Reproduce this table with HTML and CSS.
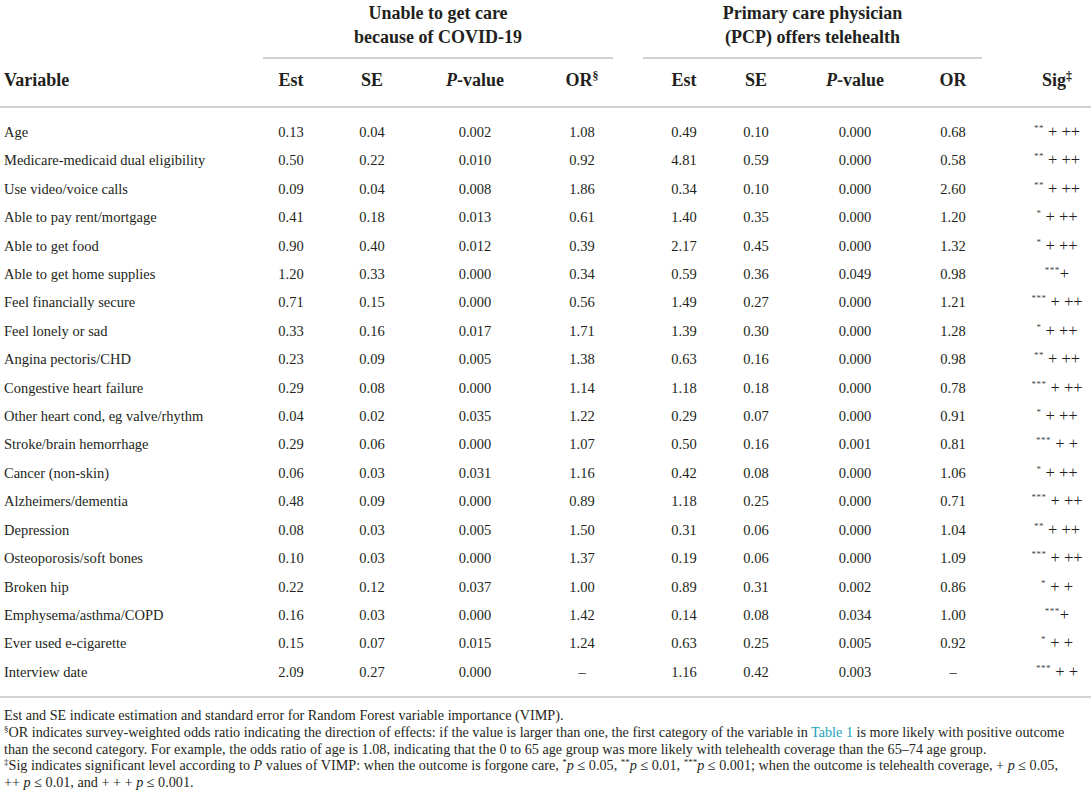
FILE: index.html
```html
<!DOCTYPE html>
<html lang="en">
<head>
<meta charset="utf-8">
<title>Table</title>
<link rel="stylesheet" href="styles.css">
</head>
<body>
<div class="page">
<table class="tbl">
  <colgroup>
    <col class="c-var"><col class="c-est1"><col class="c-se1"><col class="c-p1"><col class="c-or1">
    <col class="c-est2"><col class="c-se2"><col class="c-p2"><col class="c-or2"><col class="c-sig">
  </colgroup>
  <thead>
    <tr class="grp-row">
      <th></th>
      <th colspan="4"><div class="grp grp1">Unable to get care<br>because of COVID-19</div></th>
      <th colspan="4"><div class="grp grp2">Primary care physician<br>(PCP) offers telehealth</div></th>
      <th></th>
    </tr>
    <tr class="col-row">
      <th class="var">Variable</th>
      <th>Est</th><th>SE</th><th><i>P</i>-value</th><th>OR<sup class="fn">§</sup></th>
      <th>Est</th><th>SE</th><th><i>P</i>-value</th><th>OR</th><th class="sig">Sig<sup class="fn">‡</sup></th>
    </tr>
  </thead>
  <tbody>
    <tr><td class="var">Age</td><td>0.13</td><td>0.04</td><td>0.002</td><td>1.08</td><td>0.49</td><td>0.10</td><td>0.000</td><td>0.68</td><td class="sig"><sup class="ast">**</sup> + ++</td></tr>
    <tr><td class="var">Medicare-medicaid dual eligibility</td><td>0.50</td><td>0.22</td><td>0.010</td><td>0.92</td><td>4.81</td><td>0.59</td><td>0.000</td><td>0.58</td><td class="sig"><sup class="ast">**</sup> + ++</td></tr>
    <tr><td class="var">Use video/voice calls</td><td>0.09</td><td>0.04</td><td>0.008</td><td>1.86</td><td>0.34</td><td>0.10</td><td>0.000</td><td>2.60</td><td class="sig"><sup class="ast">**</sup> + ++</td></tr>
    <tr><td class="var">Able to pay rent/mortgage</td><td>0.41</td><td>0.18</td><td>0.013</td><td>0.61</td><td>1.40</td><td>0.35</td><td>0.000</td><td>1.20</td><td class="sig"><sup class="ast">*</sup> + ++</td></tr>
    <tr><td class="var">Able to get food</td><td>0.90</td><td>0.40</td><td>0.012</td><td>0.39</td><td>2.17</td><td>0.45</td><td>0.000</td><td>1.32</td><td class="sig"><sup class="ast">*</sup> + ++</td></tr>
    <tr><td class="var">Able to get home supplies</td><td>1.20</td><td>0.33</td><td>0.000</td><td>0.34</td><td>0.59</td><td>0.36</td><td>0.049</td><td>0.98</td><td class="sig"><sup class="ast">***</sup>+</td></tr>
    <tr><td class="var">Feel financially secure</td><td>0.71</td><td>0.15</td><td>0.000</td><td>0.56</td><td>1.49</td><td>0.27</td><td>0.000</td><td>1.21</td><td class="sig"><sup class="ast">***</sup> + ++</td></tr>
    <tr><td class="var">Feel lonely or sad</td><td>0.33</td><td>0.16</td><td>0.017</td><td>1.71</td><td>1.39</td><td>0.30</td><td>0.000</td><td>1.28</td><td class="sig"><sup class="ast">*</sup> + ++</td></tr>
    <tr><td class="var">Angina pectoris/CHD</td><td>0.23</td><td>0.09</td><td>0.005</td><td>1.38</td><td>0.63</td><td>0.16</td><td>0.000</td><td>0.98</td><td class="sig"><sup class="ast">**</sup> + ++</td></tr>
    <tr><td class="var">Congestive heart failure</td><td>0.29</td><td>0.08</td><td>0.000</td><td>1.14</td><td>1.18</td><td>0.18</td><td>0.000</td><td>0.78</td><td class="sig"><sup class="ast">***</sup> + ++</td></tr>
    <tr><td class="var">Other heart cond, eg valve/rhythm</td><td>0.04</td><td>0.02</td><td>0.035</td><td>1.22</td><td>0.29</td><td>0.07</td><td>0.000</td><td>0.91</td><td class="sig"><sup class="ast">*</sup> + ++</td></tr>
    <tr><td class="var">Stroke/brain hemorrhage</td><td>0.29</td><td>0.06</td><td>0.000</td><td>1.07</td><td>0.50</td><td>0.16</td><td>0.001</td><td>0.81</td><td class="sig"><sup class="ast">***</sup> + +</td></tr>
    <tr><td class="var">Cancer (non-skin)</td><td>0.06</td><td>0.03</td><td>0.031</td><td>1.16</td><td>0.42</td><td>0.08</td><td>0.000</td><td>1.06</td><td class="sig"><sup class="ast">*</sup> + ++</td></tr>
    <tr><td class="var">Alzheimers/dementia</td><td>0.48</td><td>0.09</td><td>0.000</td><td>0.89</td><td>1.18</td><td>0.25</td><td>0.000</td><td>0.71</td><td class="sig"><sup class="ast">***</sup> + ++</td></tr>
    <tr><td class="var">Depression</td><td>0.08</td><td>0.03</td><td>0.005</td><td>1.50</td><td>0.31</td><td>0.06</td><td>0.000</td><td>1.04</td><td class="sig"><sup class="ast">**</sup> + ++</td></tr>
    <tr><td class="var">Osteoporosis/soft bones</td><td>0.10</td><td>0.03</td><td>0.000</td><td>1.37</td><td>0.19</td><td>0.06</td><td>0.000</td><td>1.09</td><td class="sig"><sup class="ast">***</sup> + ++</td></tr>
    <tr><td class="var">Broken hip</td><td>0.22</td><td>0.12</td><td>0.037</td><td>1.00</td><td>0.89</td><td>0.31</td><td>0.002</td><td>0.86</td><td class="sig"><sup class="ast">*</sup> + +</td></tr>
    <tr><td class="var">Emphysema/asthma/COPD</td><td>0.16</td><td>0.03</td><td>0.000</td><td>1.42</td><td>0.14</td><td>0.08</td><td>0.034</td><td>1.00</td><td class="sig"><sup class="ast">***</sup>+</td></tr>
    <tr><td class="var">Ever used e-cigarette</td><td>0.15</td><td>0.07</td><td>0.015</td><td>1.24</td><td>0.63</td><td>0.25</td><td>0.005</td><td>0.92</td><td class="sig"><sup class="ast">*</sup> + +</td></tr>
    <tr><td class="var">Interview date</td><td>2.09</td><td>0.27</td><td>0.000</td><td>–</td><td>1.16</td><td>0.42</td><td>0.003</td><td>–</td><td class="sig"><sup class="ast">***</sup> + +</td></tr>
  </tbody>
</table>
<div class="notes">
  <p>Est and SE indicate estimation and standard error for Random Forest variable importance (VIMP).</p>
  <p><sup class="fn-s">§</sup>OR indicates survey-weighted odds ratio indicating the direction of effects: if the value is larger than one, the first category of the variable in <span class="link">Table 1</span> is more likely with positive outcome<br>than the second category. For example, the odds ratio of age is 1.08, indicating that the 0 to 65 age group was more likely with telehealth coverage than the 65–74 age group.</p>
  <p><sup class="fn-s">‡</sup>Sig indicates significant level according to <i>P</i> values of VIMP: when the outcome is forgone care, <sup class="fn-s">*</sup><i>p</i> ≤ 0.05, <sup class="fn-s">**</sup><i>p</i> ≤ 0.01, <sup class="fn-s">***</sup><i>p</i> ≤ 0.001; when the outcome is telehealth coverage, + <i>p</i> ≤ 0.05,<br>++ <i>p</i> ≤ 0.01, and + + + <i>p</i> ≤ 0.001.</p>
</div>
</div>
</body>
</html>
```

FILE: styles.css
```css
html, body {
  margin: 0;
  padding: 0;
  background: #ffffff;
}
body {
  font-family: "Liberation Serif", "Times New Roman", serif;
  color: #231f20;
}
.page {
  width: 1091px;
}
.tbl {
  width: 1091px;
  border-collapse: collapse;
  table-layout: fixed;
  font-size: 14.5px;
}
.c-var { width: 255px; }
.c-est1 { width: 72px; }
.c-se1 { width: 90px; }
.c-p1 { width: 116px; }
.c-or1 { width: 98px; }
.c-est2 { width: 106px; }
.c-se2 { width: 38px; }
.c-p2 { width: 160px; }
.c-or2 { width: 36px; }
.c-sig { width: 120px; }

.tbl th {
  font-weight: bold;
  font-size: 18px;
  text-align: center;
  padding: 0;
  white-space: nowrap;
}
.grp-row th {
  vertical-align: bottom;
  padding-top: 1px;
}
.grp {
  line-height: 24px;
  padding-bottom: 8px;
  border-bottom: 2px solid #d2d2d2;
}
.grp1 { margin: 0 18px 0 8px; }
.grp2 { margin: 0 -11px 0 12px; }

.col-row th {
  line-height: 24px;
  padding-top: 9px;
  padding-bottom: 14px;
  border-bottom: 2px solid #d2d2d2;
}
.col-row th i { font-style: italic; }
.tbl .var {
  text-align: left;
  padding-left: 4px;
}
.tbl .sig {
  padding-left: 52px;
}
.fn {
  font-size: 12px;
  line-height: 1;
  font-weight: bold;
  vertical-align: 0;
  position: relative;
  top: -6px;
}

.tbl td {
  text-align: center;
  padding: 0;
  height: 28.4px;
  line-height: 28.4px;
  white-space: nowrap;
}
.tbl tbody tr:first-child td {
  padding-top: 10px;
}
.tbl tbody tr:last-child td {
  padding-bottom: 10px;
  border-bottom: 2px solid #d2d2d2;
}
.tbl td.sig {
  font-size: 16.5px;
}
.ast {
  font-size: 9px;
  line-height: 1;
  vertical-align: 0;
  position: relative;
  top: -6px;
  letter-spacing: 0.5px;
  color: #444;
}

.notes {
  padding: 9px 4px 0 4px;
  font-size: 14.2px;
  line-height: 16.7px;
}
.notes p {
  margin: 0;
}
.fn-s {
  font-size: 9px;
  line-height: 1;
  vertical-align: 0;
  position: relative;
  top: -5px;
}
.link {
  color: #1ca3b7;
}
```
